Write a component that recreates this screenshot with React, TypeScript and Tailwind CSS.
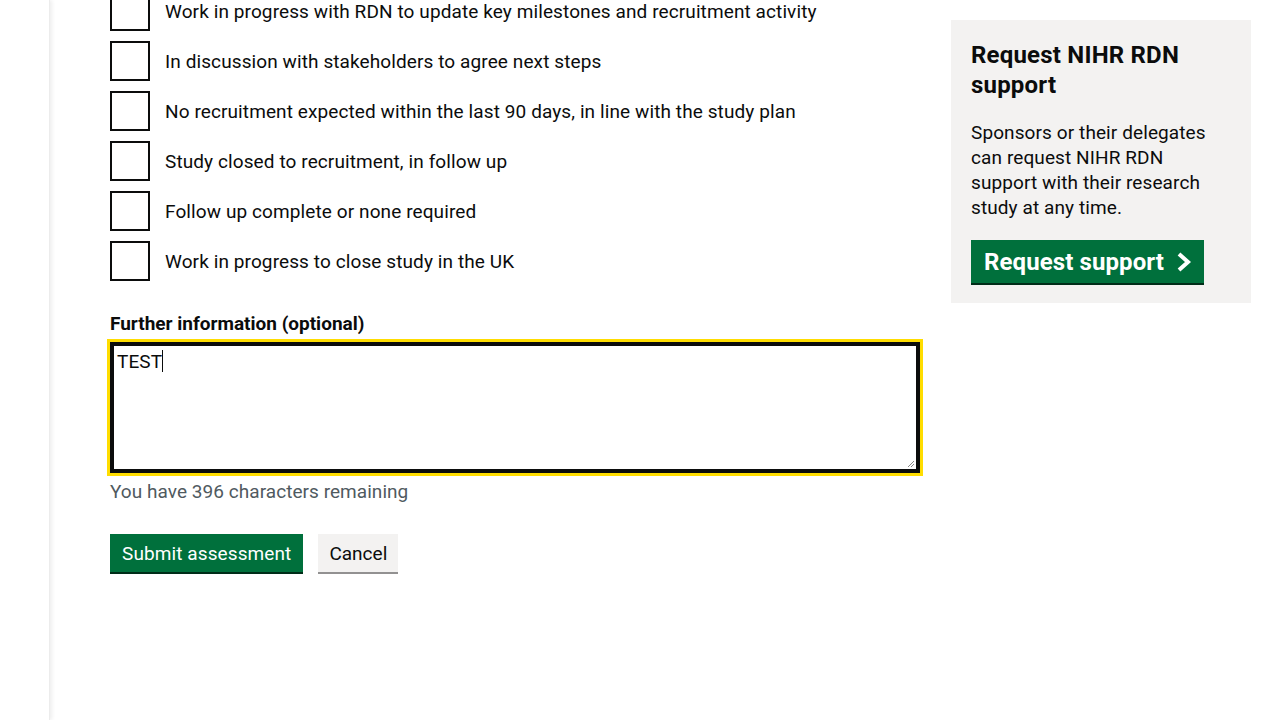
const options = [
  'Work in progress with RDN to update key milestones and recruitment activity',
  'In discussion with stakeholders to agree next steps',
  'No recruitment expected within the last 90 days, in line with the study plan',
  'Study closed to recruitment, in follow up',
  'Follow up complete or none required',
  'Work in progress to close study in the UK',
];

function Checkbox({ label }: { label: string }) {
  return (
    <div className="flex items-center gap-[15px] h-[40px]">
      <div className="w-[40px] h-[40px] border-2 border-[#0b0c0c] bg-white shrink-0" />
      <span className="text-[19px] leading-[25px] text-[#0b0c0c] tracking-[0.1px]">{label}</span>
    </div>
  );
}

export default function App() {
  return (
    <div
      className="flex min-h-screen bg-white overflow-hidden"
      style={{ fontFamily: 'Roboto, "Liberation Sans", sans-serif' }}
    >
      <div className="w-[50px] shrink-0 border-r border-[#ececec] shadow-[2px_0_4px_rgba(0,0,0,0.07)]" />

      <div className="flex flex-1 pl-[60px] pr-[29px] gap-[31px]">
        {/* main form */}
        <div className="w-[810px] shrink-0 -mt-[9px]">
          <div className="flex flex-col gap-[10px] mb-[30px]">
            {options.map((o) => (
              <Checkbox key={o} label={o} />
            ))}
          </div>

          <label className="block text-[19px] leading-[25px] font-bold text-[#0b0c0c] mb-[6px]">
            Further information (optional)
          </label>
          <div className="relative h-[131px] border-2 border-[#0b0c0c] shadow-[inset_0_0_0_2px_#0b0c0c] outline-[3px] outline-solid outline-[#ffdd00] bg-white px-[5px] py-[5px]">
            <p className="text-[19px] leading-[25px] text-[#0b0c0c] tracking-[0.1px]">
              TEST<span className="inline-block w-px h-[22px] bg-[#0b0c0c] align-[-4px]" />
            </p>
            <svg className="absolute right-[3px] bottom-[3px]" width="8" height="8" viewBox="0 0 8 8">
              <path d="M7 1 L1 7 M7 4 L4 7" stroke="#888" strokeWidth="1" />
            </svg>
          </div>
          <p className="mt-[6px] text-[19px] leading-[25px] text-[#505a5f] tracking-[0.05px]">
            You have 396 characters remaining
          </p>

          <div className="flex gap-[15px] mt-[30px]">
            <button className="h-[38px] px-[12px] bg-[#00703c] text-white text-[19px] leading-[25px] tracking-[0.1px] shadow-[0_2px_0_#002d18]">
              Submit assessment
            </button>
            <button className="h-[38px] px-[11px] bg-[#f3f2f1] text-[#0b0c0c] text-[19px] leading-[25px] shadow-[0_2px_0_#929191]">
              Cancel
            </button>
          </div>
        </div>

        {/* side panel */}
        <div className="w-[300px] shrink-0 mt-[20px] self-start bg-[#f3f2f1] px-[20px] pt-[20px] pb-[20px]">
          <h2 className="text-[24px] leading-[30px] font-bold text-[#0b0c0c] mb-[20px] tracking-[0.2px]">
            Request NIHR RDN support
          </h2>
          <p className="text-[19px] leading-[25px] text-[#0b0c0c] mb-[20px] tracking-[0.1px]">
            Sponsors or their delegates can request NIHR RDN support with their research study at any time.
          </p>
          <a className="flex w-fit items-center h-[43px] pl-[13px] pr-[11px] gap-[11px] bg-[#00703c] text-white text-[24px] font-bold shadow-[0_2px_0_#002d18] tracking-[0.1px]">
            Request support
            <svg width="18" height="20" viewBox="0 0 18 20">
              <path d="M4 2 L13 10 L4 18" fill="none" stroke="white" strokeWidth="4" />
            </svg>
          </a>
        </div>
      </div>
    </div>
  );
}
